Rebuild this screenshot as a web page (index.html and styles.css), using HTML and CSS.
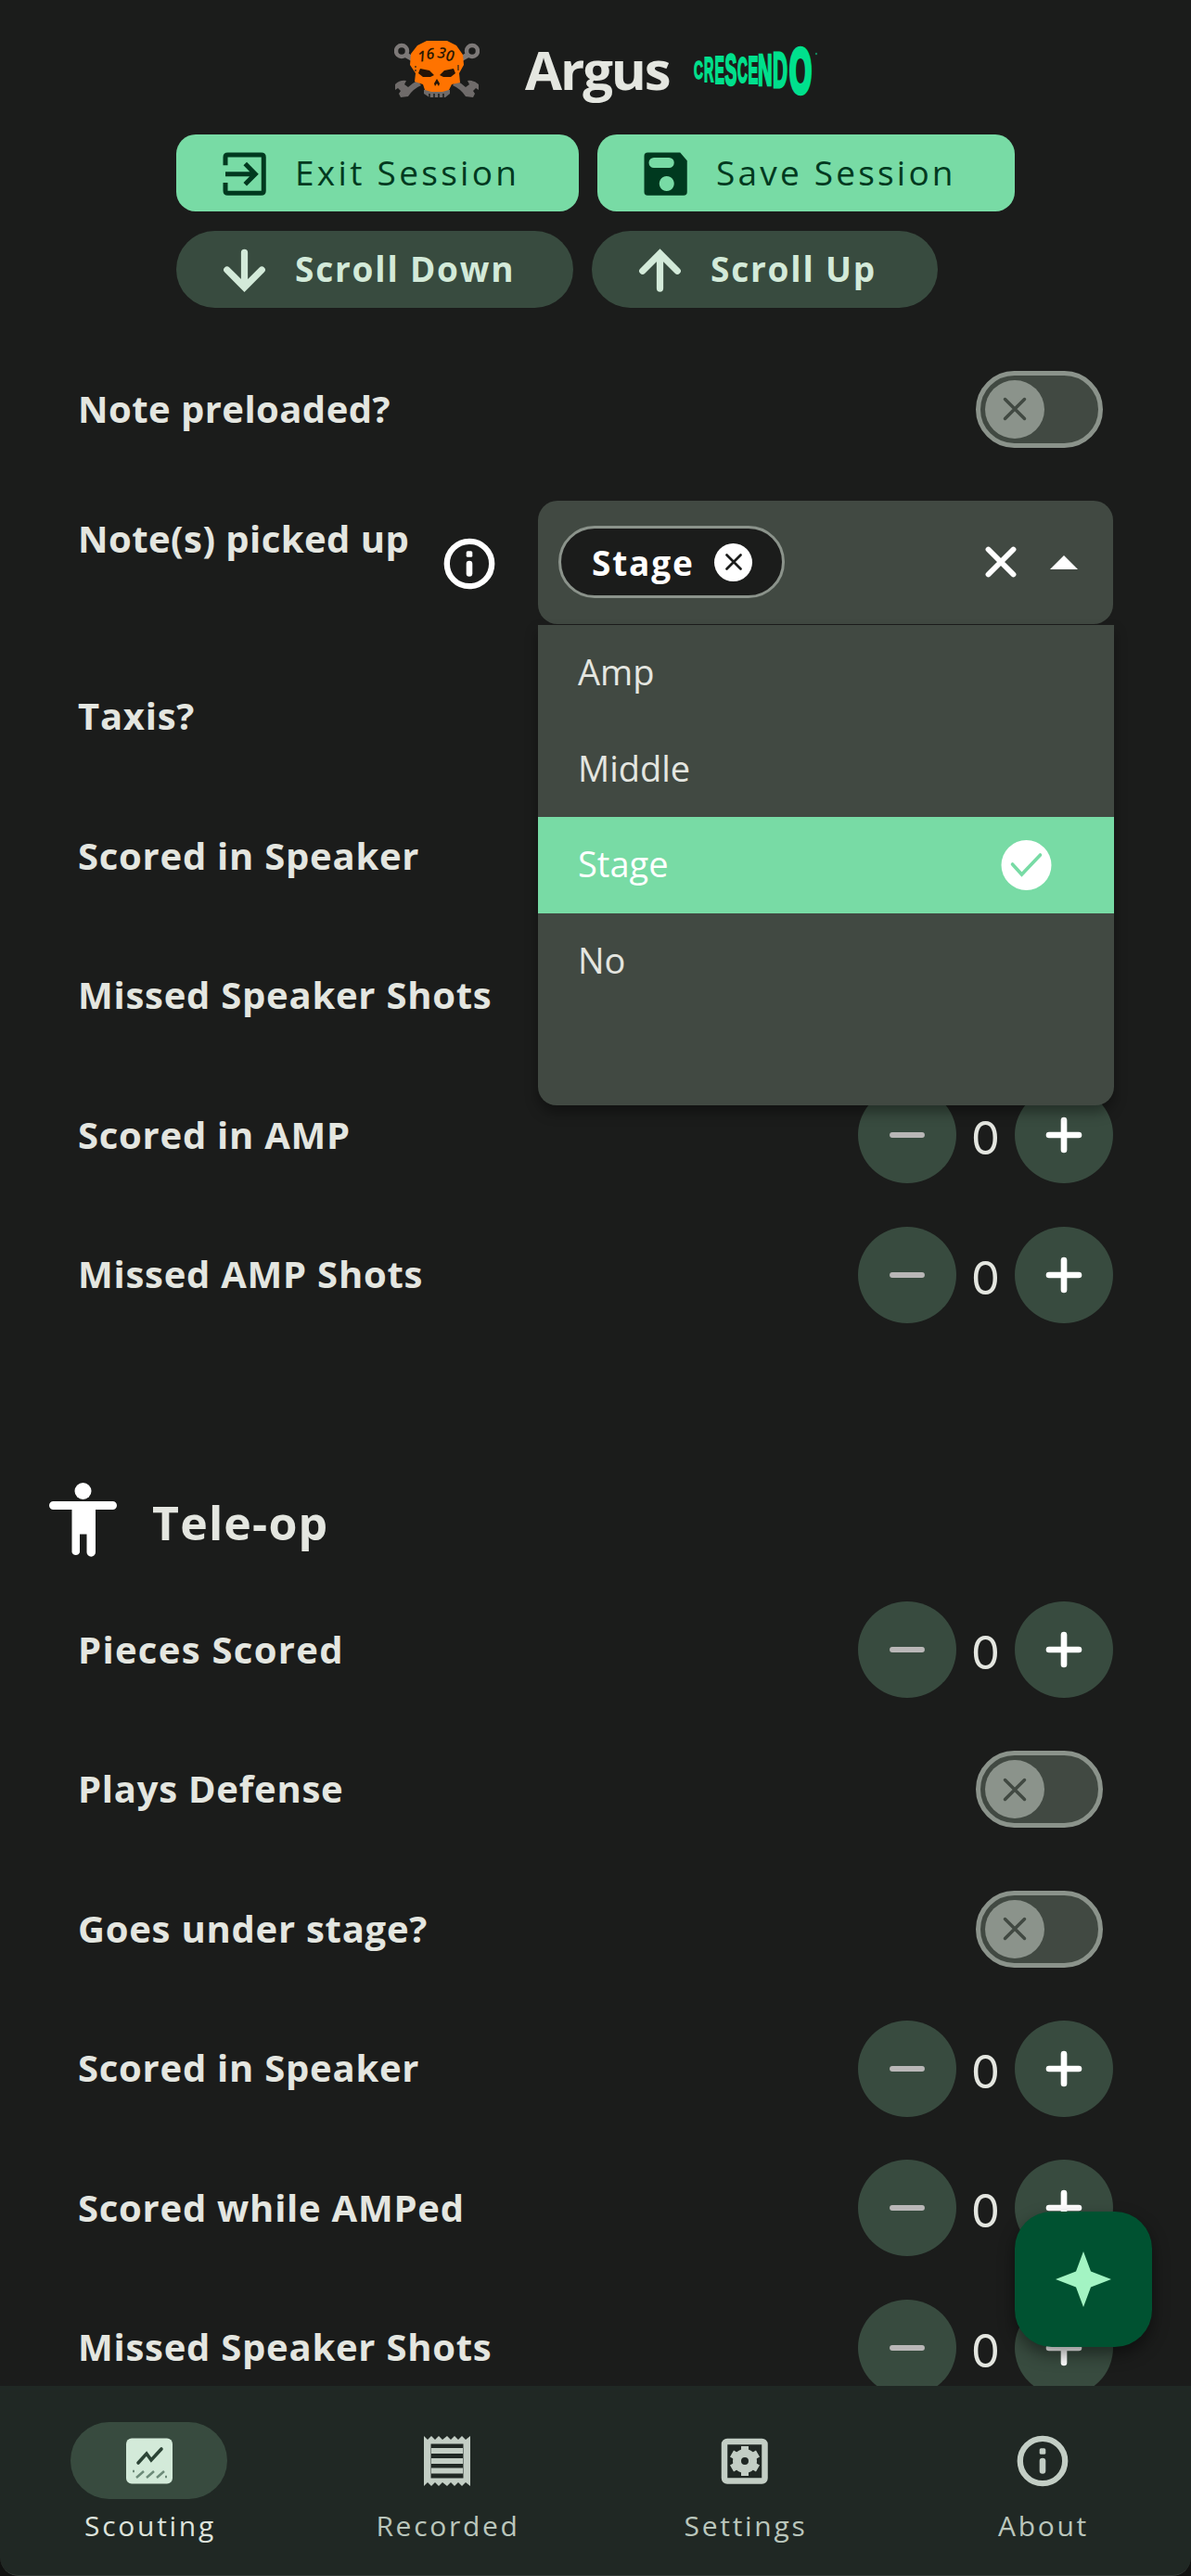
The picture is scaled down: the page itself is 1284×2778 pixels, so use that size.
FILE: index.html
```html
<!DOCTYPE html>
<html lang="en">
<head>
<meta charset="utf-8">
<title>Argus</title>
<link rel="stylesheet" href="styles.css">
</head>
<body>
<svg class="defs" aria-hidden="true">
  <symbol id="i-minus" viewBox="0 0 24 24"><path d="M6 12h12" fill="none" stroke="currentColor" stroke-width="2.2" stroke-linecap="round"/></symbol>
  <symbol id="i-plus" viewBox="0 0 24 24"><path d="M6 12h12M12 6v12" fill="none" stroke="currentColor" stroke-width="2.5" stroke-linecap="round"/></symbol>
  <symbol id="i-x" viewBox="0 0 24 24"><path d="M6 6l12 12M18 6L6 18" fill="none" stroke="currentColor" stroke-linecap="round"/></symbol>
  <symbol id="i-info" viewBox="0 0 24 24"><circle cx="12" cy="12" r="8.8" fill="none" stroke="currentColor" stroke-width="2.3"/><path d="M12 12v3.800" stroke="currentColor" stroke-width="2.4" stroke-linecap="round"/><rect x="10.800" y="7" width="2.4" height="2.4" rx=".6" fill="currentColor"/></symbol>
</svg>
<div class="app">
  <header class="top">
    <div class="brand">
      <svg class="skull" viewBox="0 0 92 62">
        <g fill="none" stroke="#7d7978" stroke-width="4.5">
          <circle cx="8" cy="11" r="6"/><circle cx="84" cy="11" r="6"/>
          <path d="M12 15l9 5M80 15l-9 5" stroke-width="6"/>
        </g>
        <path d="M1 53V47q5-5 12-4l-2 4 4 3q4-4 10-7l4 5q-9 4-14 12l-8 1-2-4 2-3-3-3zM91 53V47q-5-5-12-4l2 4-4 3q-4-4-10-7l-4 5q9 4 14 12l8 1 2-4-2-3 3-3z" fill="#6f6b6a"/>
        <path d="M32 53h28v4l-5 4H38l-6-4z" fill="#6f6b6a"/>
        <path d="M35 0h22l10 5 7 10 1 11-5 9 1 10-9 2-3 6-7 2H40l-7-2-2-6-9-3 1-9-6-9 1-12 7-9z" fill="#ff7300"/>
        <path d="M28 30l10 2 5 5-4 2h-8l-5-4zM64 30l-10 2-5 5 4 2h8l5-4zM46 41l3 5-1 3-2-3-2 3-1-3z" fill="#241407"/>
        <path d="M38 57v4M43 57v4M48 57v4M53 57v4" stroke="#1b1c1b" stroke-width="1.5"/>
        <path d="M23 27v2M23 31v2M69 26v6" stroke="#7c420f" stroke-width="2"/>
        <text class="skull-no" x="26 35 46 55" y="23 20 18 21" rotate="-8 -6 8 8">1630</text>
      </svg>
      <h1>Argus</h1>
      <svg class="crescendo" viewBox="0 0 132 54" aria-label="Crescendo">
        <g class="cres">
          <text transform="translate(0 37) scale(.46 .95)">C</text>
          <text transform="translate(11 40) scale(.48 1.22)">R</text>
          <text transform="translate(22.500 42) scale(.52 1.4)">E</text>
          <text transform="translate(33.500 44) scale(.64 1.58)">S</text>
          <text transform="translate(47 41) scale(.5 1.3)">C</text>
          <text transform="translate(58.500 42) scale(.54 1.4)">E</text>
          <text transform="translate(69 44) scale(.72 1.58)">N</text>
          <text transform="translate(85 46) scale(.74 1.78)">D</text>
          <text class="big" transform="translate(103 52) scale(1.03 2.3)">O</text>
        </g>
        <circle cx="132" cy="10" r="1.200" fill="#14855c"/>
      </svg>
    </div>
    <div class="actions">
      <button class="btn filled exit"><svg viewBox="0 0 24 24"><path d="M4 8.500V5q0-1 1-1h14.500q1 0 1 1v14.500q0 1-1 1H5q-1 0-1-1V16M4 12.250h12M12.500 7.800l4.400 4.450-4.400 4.450" fill="none" stroke="currentColor" stroke-width="2"/></svg><span>Exit Session</span></button>
      <button class="btn filled save"><svg viewBox="0 0 24 24"><path fill-rule="evenodd" d="M4.500 3h14L21.500 6.500V20q0 1.500-1.500 1.500H4.500Q3 21.500 3 20V4.500Q3 3 4.500 3zM7.200 5.200a2.200 2.200 0 0 0 0 4.400h6.500a2.200 2.200 0 0 0 0-4.400zM12.700 13.200a3.200 3.200 0 1 0 .01 0z" fill="currentColor"/></svg><span>Save Session</span></button>
      <button class="btn tonal down"><svg viewBox="0 0 24 24"><path d="M12.200 4.500v14.500M4.700 12l7.500 7.500 7.500-7.500" fill="none" stroke="currentColor" stroke-width="2.900" stroke-linecap="round"/></svg><span>Scroll Down</span></button>
      <button class="btn tonal up"><svg viewBox="0 0 24 24"><path d="M12.200 20V5.500M4.700 12.500l7.500-7.500 7.500 7.500" fill="none" stroke="currentColor" stroke-width="2.900" stroke-linecap="round"/></svg><span>Scroll Up</span></button>
    </div>
  </header>

  <main class="form">
    <div class="row"><label class="snug">Note preloaded?</label><span class="switch"><i><svg><use href="#i-x"/></svg></i></span></div>
    <div class="row pick">
      <label class="snug">Note(s) picked up</label>
      <svg class="info"><use href="#i-info"/></svg>
      <div class="select">
        <div class="field">
          <span class="chip">Stage<i><svg><use href="#i-x"/></svg></i></span>
          <svg class="clear"><use href="#i-x"/></svg>
          <svg class="caret" viewBox="0 0 30 15"><path d="M15 0l15 15H0z" fill="#fff"/></svg>
        </div>
        <ul class="menu">
          <li><span>Amp</span></li>
          <li><span>Middle</span></li>
          <li class="on"><span>Stage</span><svg viewBox="0 0 54 54"><circle cx="27" cy="27" r="27" fill="#fff"/><path d="M12 26l10 11 20-21" fill="none" stroke="#78dba5" stroke-width="3.600" stroke-linecap="round"/></svg></li>
          <li><span>No</span></li>
        </ul>
      </div>
    </div>
    <div class="row"><label>Taxis?</label></div>
    <div class="row"><label>Scored in Speaker</label></div>
    <div class="row"><label>Missed Speaker Shots</label></div>
    <div class="row"><label>Scored in AMP</label><div class="counter"><button class="off"><svg><use href="#i-minus"/></svg></button><output>0</output><button><svg><use href="#i-plus"/></svg></button></div></div>
    <div class="row"><label>Missed AMP Shots</label><div class="counter"><button class="off"><svg><use href="#i-minus"/></svg></button><output>0</output><button><svg><use href="#i-plus"/></svg></button></div></div>

    <h2><svg viewBox="0 0 73 80"><circle cx="36.500" cy="9" r="9"/><path d="M4.500 20h64a4.500 4.500 0 0 1 0 9H50v46a4.500 4.500 0 0 1-9.500 0V55.500h-7.500V75a4.500 4.500 0 0 1-8.500 0V29h-20a4.500 4.500 0 0 1 0-9z"/></svg><span>Tele-op</span></h2>

    <div class="row"><label class="wide">Pieces Scored</label><div class="counter"><button class="off"><svg><use href="#i-minus"/></svg></button><output>0</output><button><svg><use href="#i-plus"/></svg></button></div></div>
    <div class="row"><label>Plays Defense</label><span class="switch"><i><svg><use href="#i-x"/></svg></i></span></div>
    <div class="row"><label>Goes under stage?</label><span class="switch"><i><svg><use href="#i-x"/></svg></i></span></div>
    <div class="row"><label>Scored in Speaker</label><div class="counter"><button class="off"><svg><use href="#i-minus"/></svg></button><output>0</output><button><svg><use href="#i-plus"/></svg></button></div></div>
    <div class="row"><label>Scored while AMPed</label><div class="counter"><button class="off"><svg><use href="#i-minus"/></svg></button><output>0</output><button><svg><use href="#i-plus"/></svg></button></div></div>
    <div class="row"><label>Missed Speaker Shots</label><div class="counter"><button class="off"><svg><use href="#i-minus"/></svg></button><output>0</output><button><svg><use href="#i-plus"/></svg></button></div></div>
  </main>

  <button class="fab" aria-label="Assist"><svg viewBox="0 0 60 60"><path d="M30 0l8 21.500L60 30l-22 8.500L30 60l-8-21.500L0 30l22-8.500z" fill="#a3f4c3"/></svg></button>

  <nav class="nav">
    <a class="active"><span class="pill"><svg viewBox="0 0 56 56"><rect x="3" y="3.500" width="50" height="49" rx="6" fill="currentColor"/><path d="M16 30l9-10 5 7 11-12" fill="none" stroke="#2c4436" stroke-width="3.600" stroke-linecap="round"/><path d="M10 39h2M14 46l8-7M25 46l8-7M36 46l8-7M45 45h2" stroke="#6d8b79" stroke-width="2.500"/></svg></span><span>Scouting</span></a>
    <a><span class="pill"><svg viewBox="0 0 56 56"><path fill-rule="evenodd" fill="currentColor" d="M3 1l4 4 4-4 4 4 4-4 4 4 5-4 4 4 4-4 4 4 4-4 4 4 5-4v54l-5-4-4 4-4-4-4 4-4-4-4 4-5-4-4 4-4-4-4 4-4-4-4 4zM10.500 9.500v37h35v-37z"/><path d="M11 17h34M11 28h34M11 38.500h34" stroke="currentColor" stroke-width="6"/></svg></span><span>Recorded</span></a>
    <a><span class="pill"><svg viewBox="0 0 56 56"><rect x="6" y="7" width="43.500" height="42.500" rx="3" fill="none" stroke="currentColor" stroke-width="6.500"/><circle cx="28" cy="28" r="8.500" fill="none" stroke="currentColor" stroke-width="9"/><path d="M28 12v7M28 37v7M14 20l6 3.500M36 32.500l6 3.500M42 20l-6 3.500M20 32.500L14 36" stroke="currentColor" stroke-width="8"/></svg></span><span>Settings</span></a>
    <a><span class="pill"><svg viewBox="0 0 24 24"><use href="#i-info"/></svg></span><span>About</span></a>
  </nav>
</div>
</body>
</html>
```
FILE: styles.css
```css
* { box-sizing: border-box; margin: 0; padding: 0; }
body { background: #111211; }
button { border: 0; font: inherit; color: inherit; }
svg { display: block; flex: none; }
.defs { position: absolute; width: 0; height: 0; }

.app {
  position: relative;
  width: 1284px;
  height: 2778px;
  display: flex;
  flex-direction: column;
  overflow: hidden;
  border-radius: 0 0 20px 20px;
  background: #1b1c1b;
  color: #e4e6e0;
  font-family: "Open Sans", "Noto Sans", sans-serif;
}

.top { flex: none; height: 366px; padding-top: 29px; }
.brand { display: flex; align-items: center; height: 91px; padding-left: 425px; }
.skull { width: 92px; height: 62px; }
.skull-no { font: italic 600 16px "Open Sans", sans-serif; fill: #2c1803; }
.brand h1 { box-sizing: content-box; width: 182px; padding-left: 49px; font-size: 58px; font-weight: 700; line-height: 90px; letter-spacing: -2.1px; }
.crescendo { width: 132px; height: 54px; overflow: visible; }
.cres { font: 700 30px "Liberation Sans", sans-serif; fill: #00e08d; stroke: #00e08d; stroke-width: 1.6; }
.cres .big { stroke-width: 2.4; }

.actions { display: flex; flex-wrap: wrap; gap: 21px 20px; margin-top: 25px; padding: 0 180px 0 190px; }
.btn { display: flex; align-items: center; height: 83px; padding-left: 43px; font-size: 37px; white-space: nowrap; }
.btn svg { width: 60px; height: 60px; margin-right: 25px; }
.btn span { margin-top: -2px; }
.filled { border-radius: 21px; background: #78dba5; color: #00391f; font-weight: 400; }
.tonal { border-radius: 42px; background: #384b3f; color: #d3ead9; font-weight: 700; }
.exit { width: 434px; letter-spacing: 3.3px; }
.save { width: 450px; letter-spacing: 3.2px; }
.down { width: 428px; letter-spacing: 1.8px; }
.up { width: 373px; letter-spacing: 1.8px; }

.form { flex: none; height: 2207px; overflow: hidden; }
.row { display: flex; align-items: center; justify-content: space-between; height: 150.5px; padding: 0 84px 0 84px; }
.row label { margin-top: -1px; font-size: 40px; font-weight: 700; line-height: 56px; letter-spacing: 0.75px; white-space: nowrap; }
.row .snug { letter-spacing: 0.45px; }
.row .wide { letter-spacing: 1.3px; }

.switch { width: 137px; height: 83px; margin-right: 11px; padding: 5px; border: 5px solid #8b938b; border-radius: 42px; background: #414942; }
.switch i { display: flex; align-items: center; justify-content: center; width: 64px; height: 63px; border-radius: 50%; background: #8b938b; color: #414942; }
.switch svg { width: 42px; height: 42px; stroke-width: 2; }

.pick { height: 181px; align-items: flex-start; justify-content: flex-start; padding-top: 23px; }
.pick label { width: 390px; margin-top: 13px; }
.info { width: 66px; height: 66px; margin: 35px 0 0 -1px; color: #fff; }
.select { position: relative; width: 620px; margin-left: 41px; }
.field { display: flex; align-items: center; height: 133px; padding: 0 38px 0 22px; border-radius: 21px; background: #414942; color: #fff; }
.chip { display: flex; align-items: center; justify-content: space-between; width: 244px; height: 78px; margin-top: 0; padding: 0 32px 0 33px; border: 3px solid #8b938b; border-radius: 40px; background: #1b1c1b; font-size: 37px; font-weight: 700; letter-spacing: 1.8px; }
.chip i { display: flex; align-items: center; justify-content: center; width: 41px; height: 41px; border-radius: 50%; background: #fff; color: #1b1c1b; }
.chip svg { width: 30px; height: 30px; stroke-width: 2.2; }
.clear { width: 54px; height: 54px; margin: 0 26px 0 auto; stroke-width: 2.6; }
.caret { width: 30px; height: 15px; }
.menu { position: absolute; left: 0; top: 134px; z-index: 2; width: 621px; height: 518px; list-style: none; border-radius: 0 0 20px 20px; background: #414942; box-shadow: 0 8px 14px rgba(0, 0, 0, .35); overflow: hidden; }
.menu li { display: flex; align-items: center; justify-content: space-between; height: 103.8px; padding: 0 67px 0 43px; font-size: 38px; }
.menu span { margin-top: -3px; }
.menu .on { background: #78dba5; color: #fff; }
.menu svg { width: 55px; height: 54px; }

.counter { display: flex; align-items: center; }
.counter button { display: flex; align-items: center; justify-content: center; width: 106px; height: 104px; border-radius: 50%; background: #384b3f; color: #fff; }
.counter .off { color: #b9b7b7; }
.counter svg { width: 64px; height: 64px; }
.counter output { width: 63px; margin-top: 8px; text-align: center; font: 400 49px/60px Inter, sans-serif; }

.form h2 { display: flex; align-items: center; height: 254px; padding: 130px 0 0 53px; font-size: 50px; line-height: 60px; }
.form h2 svg { width: 73px; height: 80px; margin-top: -7px; fill: #fff; }
.form h2 span { margin-left: 38px; letter-spacing: 1.2px; }

.fab { position: absolute; left: 1094px; top: 2385px; z-index: 3; display: flex; align-items: center; justify-content: center; width: 148px; height: 146px; border-radius: 40px; background: #005231; box-shadow: 0 8px 18px rgba(0, 0, 0, .45); }
.fab svg { width: 60px; height: 60px; }

.nav { flex: none; display: grid; grid-template-columns: repeat(4, 1fr); height: 205px; padding-top: 39px; border-bottom: 1px solid #343b37; border-radius: 0 0 20px 20px; background: #202824; color: #c3cec5; }
.nav a { display: flex; flex-direction: column; align-items: center; font-size: 30px; line-height: 40px; letter-spacing: 2.7px; color: #bac6bc; }
.nav a > span:last-child { padding-left: 3px; }
.pill { display: flex; align-items: center; justify-content: center; width: 169px; height: 83px; margin-bottom: 9px; border-radius: 42px; color: #c3cec5; }
.pill svg { width: 56px; height: 56px; }
.pill svg[viewBox="0 0 24 24"] { width: 66px; height: 66px; }
.nav .active { color: #dde3dc; }
.active .pill { background: #384b3f; color: #d3ead9; }
```
